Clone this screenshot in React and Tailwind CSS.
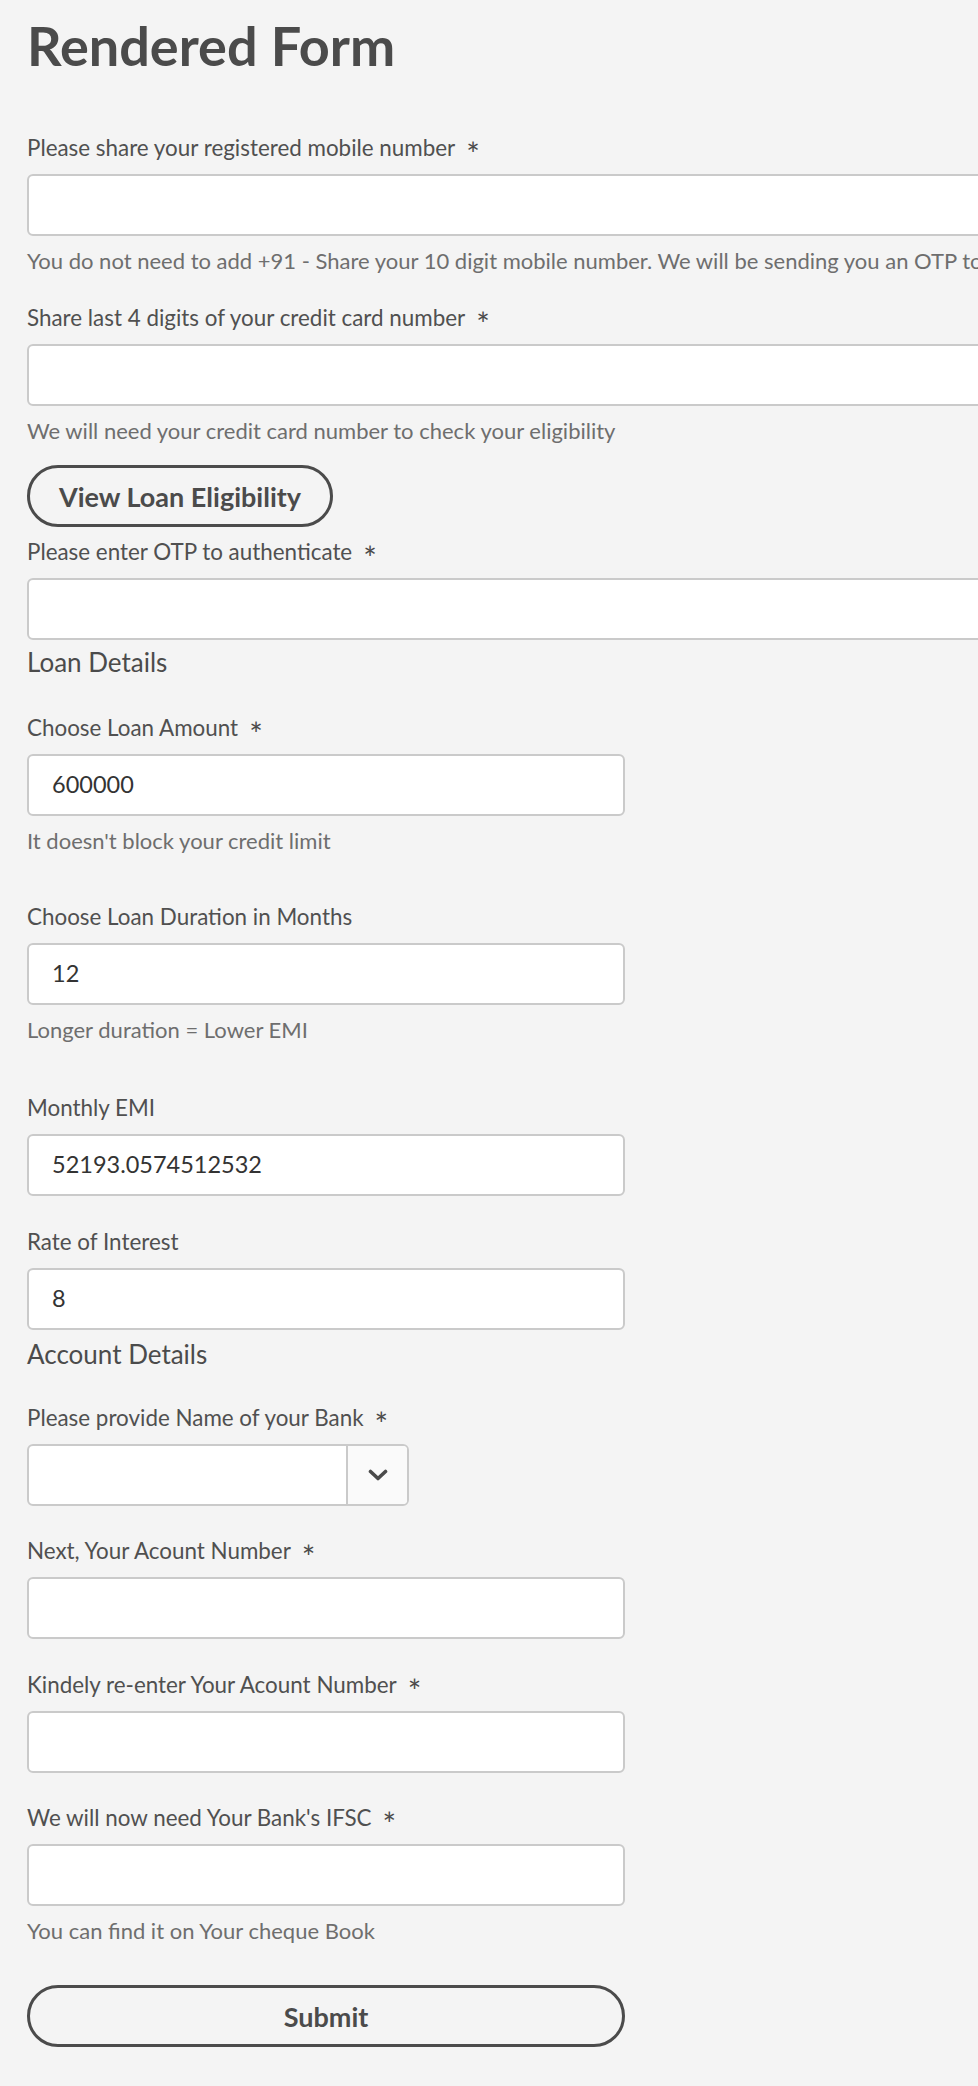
import React from 'react';

const Label = ({ children, required }) => (
  <div className="flex h-[24px] items-center text-[22.4px] leading-[24px] text-[#505050] mb-[14px] whitespace-nowrap">
    <span>{children}</span>
    {required && (
      <span className="relative top-[6px] ml-[11px] text-[32px] leading-[24px] text-[#4b4b4b]">*</span>
    )}
  </div>
);

const Help = ({ children }) => (
  <div className="mt-[13px] text-[22px] leading-[24px] text-[#6e6e6e] whitespace-nowrap">{children}</div>
);

const TextBox = ({ value, wide }) => (
  <div
    className={
      (wide ? 'w-[1200px] ' : 'w-[598px] ') +
      'h-[62px] rounded-[6px] border-2 border-[#cacaca] bg-white flex items-center pl-[23px] text-[23.5px] text-[#333333]'
    }
  >
    {value}
  </div>
);

const Field = ({ label, required, value, help, wide, className = '' }) => (
  <div className={className}>
    <Label required={required}>{label}</Label>
    <TextBox value={value} wide={wide} />
    {help && <Help>{help}</Help>}
  </div>
);

const SectionTitle = ({ children, className = '' }) => (
  <div className={'text-[26px] leading-[32px] text-[#4b4b4b] ' + className}>{children}</div>
);

export default function App() {
  return (
    <div className="min-h-screen w-full overflow-hidden bg-[#f4f4f4] font-['Lato',sans-serif] text-[#4b4b4b]">
      <div className="px-[27px] pt-[14px] pb-[40px]">
        <h1 className="text-[54px] leading-[64px] font-bold text-[#4b4b4b]">Rendered Form</h1>

        <Field
          className="mt-[58px]"
          label="Please share your registered mobile number"
          required
          wide
          help="You do not need to add +91 - Share your 10 digit mobile number. We will be sending you an OTP to verify your number"
        />
        <Field
          className="mt-[33px]"
          label="Share last 4 digits of your credit card number"
          required
          wide
          help="We will need your credit card number to check your eligibility"
        />

        <button className="mt-[22px] h-[62px] px-[29px] rounded-full border-[3px] border-[#4b4b4b] text-[27px] leading-none font-bold text-[#4b4b4b] bg-transparent">
          View Loan Eligibility
        </button>

        <Field className="mt-[13px]" label="Please enter OTP to authenticate" required wide />

        <SectionTitle className="mt-[6px]">Loan Details</SectionTitle>

        <Field
          className="mt-[38px]"
          label="Choose Loan Amount"
          required
          value="600000"
          help="It doesn't block your credit limit"
        />
        <Field
          className="mt-[52px]"
          label="Choose Loan Duration in Months"
          value="12"
          help="Longer duration = Lower EMI"
        />
        <Field className="mt-[54px]" label="Monthly EMI" value="52193.0574512532" />
        <Field className="mt-[34px]" label="Rate of Interest" value="8" />

        <SectionTitle className="mt-[8px]">Account Details</SectionTitle>

        <div className="mt-[36px]">
          <Label required>Please provide Name of your Bank</Label>
          <div className="w-[382px] h-[62px] rounded-[6px] border-2 border-[#cacaca] bg-white flex overflow-hidden">
            <div className="flex-1" />
            <div className="w-[61px] border-l-2 border-[#cacaca] bg-[#fafafa] flex items-center justify-center">
              <svg width="20" height="13" viewBox="0 0 20 13" fill="none">
                <path d="M2.5 2.5 L10 9.5 L17.5 2.5" stroke="#4b4b4b" strokeWidth="3.6" strokeLinecap="round" strokeLinejoin="round" />
              </svg>
            </div>
          </div>
        </div>

        <Field className="mt-[33px]" label="Next, Your Acount Number" required />
        <Field className="mt-[34px]" label="Kindely re-enter Your Acount Number" required />
        <Field
          className="mt-[33px]"
          label="We will now need Your Bank's IFSC"
          required
          help="You can find it on Your cheque Book"
        />

        <button className="mt-[42px] w-[598px] h-[62px] rounded-full border-[3px] border-[#4b4b4b] text-[27px] leading-none font-bold text-[#4b4b4b] bg-transparent">
          Submit
        </button>
      </div>
    </div>
  );
}
